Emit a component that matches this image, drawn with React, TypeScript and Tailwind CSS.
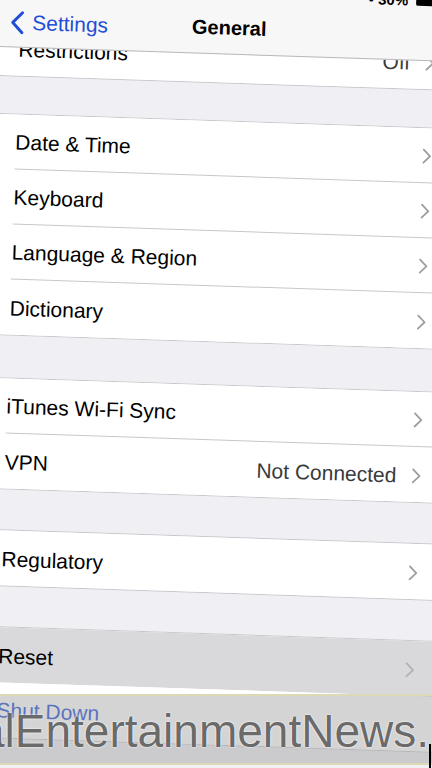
import clsx from "clsx";

type RowProps = {
    label: string;
    value?: string;
    last?: boolean;
    highlighted?: boolean;
};

const Chevron = ({ color = "#9d9da2" }: { color?: string }) => (
    <svg width="10" height="16" viewBox="0 0 10 16" fill="none">
        <path
            d="M1.5 1.5L8 8l-6.5 6.5"
            stroke={color}
            strokeWidth="1.8"
            strokeLinecap="round"
            strokeLinejoin="round"
        />
    </svg>
);

function Row({ label, value, last, highlighted }: RowProps) {
    return (
        <div
            className={clsx(
                "flex h-[55px] pl-[20px]",
                highlighted ? "bg-[#d9d9db]" : "bg-white"
            )}
        >
            <div
                className={clsx(
                    "flex flex-1 items-center pt-[2px] pr-[23px]",
                    !last && "border-b border-[#c8c8cc]"
                )}
            >
                <span className="flex-1 text-[21px] text-black">{label}</span>
                {value && (
                    <span className="mr-[15px] text-[21px] text-[#3a3a3c]">
                        {value}
                    </span>
                )}
                <Chevron color={highlighted ? "#b2b2b6" : "#9d9da2"} />
            </div>
        </div>
    );
}

const Section = ({ children }: { children: React.ReactNode }) => (
    <div className="border-y border-[#c8c8cc] bg-white">{children}</div>
);

export default function App() {
    return (
        <div className="relative h-[768px] w-[432px] overflow-hidden bg-[#f7f7f7] font-['Liberation_Sans',Arial,sans-serif]">
            {/* the whole phone screen is tilted in the photo */}
            <div className="relative h-[820px] w-[460px] origin-top-left rotate-[1.9deg] bg-[#efeff4]">
                <div className="flex flex-col pt-[19px]">
                    <Section>
                        <Row label="Restrictions" value="Off" last />
                    </Section>

                    <div className="mt-[37px]">
                        <Section>
                            <Row label="Date & Time" />
                            <Row label="Keyboard" />
                            <Row label="Language & Region" />
                            <Row label="Dictionary" last />
                        </Section>
                    </div>

                    <div className="mt-[42px]">
                        <Section>
                            <Row label="iTunes Wi-Fi Sync" />
                            <Row label="VPN" value="Not Connected" last />
                        </Section>
                    </div>

                    <div className="mt-[40px]">
                        <Section>
                            <Row label="Regulatory" last />
                        </Section>
                    </div>

                    <div className="mt-[40px]">
                        <Section>
                            <Row label="Reset" highlighted last />
                            <div className="flex h-[55px] items-center bg-white pl-[20px]">
                                <span className="text-[21px] text-[#1f4fd8]">
                                    Shut Down
                                </span>
                            </div>
                        </Section>
                    </div>
                </div>

                {/* nav bar sits over the scrolled list */}
                <div className="absolute left-0 top-[-30px] flex h-[77px] w-full flex-col border-b border-[#b8b8bc] bg-[#f7f7f7]">
                    <div className="flex h-[24px] items-end justify-end gap-[8px] pr-[20px]">
                        <span className="text-[15px] font-bold leading-none text-black">
                            • 30%
                        </span>
                        <div className="mb-[2px] h-[11px] w-[24px] rounded-[2px] border-2 border-black bg-black" />
                    </div>
                    <div className="relative flex flex-1 items-center pt-[4px] pl-[11px]">
                        <svg width="14" height="24" viewBox="0 0 14 24" fill="none">
                            <path
                                d="M12 2L2.5 12 12 22"
                                stroke="#1f4fd8"
                                strokeWidth="3"
                                strokeLinecap="round"
                                strokeLinejoin="round"
                            />
                        </svg>
                        <span className="ml-[8px] text-[21px] text-[#1f4fd8]">
                            Settings
                        </span>
                        <span className="absolute left-1/2 top-[11px] -translate-x-1/2 text-[20px] font-bold text-black">
                            General
                        </span>
                    </div>
                </div>
            </div>

            {/* watermark strip laid over the bottom of the photo */}
            <div className="absolute left-0 top-[694px] h-[71px] w-full overflow-hidden border-y-2 border-[#dcd9b6] bg-[#a0a0a0]/45">
                <div className="ml-[-21px] mt-[12px] whitespace-nowrap text-[46px] leading-none text-[#6a6a6a] [text-shadow:0_0_2px_#fff,0_0_1px_#fff]">
                    alEntertainmentNews.
                </div>
            </div>
            <div className="absolute bottom-0 right-[1px] h-[24px] w-[2px] bg-black" />
        </div>
    );
}
